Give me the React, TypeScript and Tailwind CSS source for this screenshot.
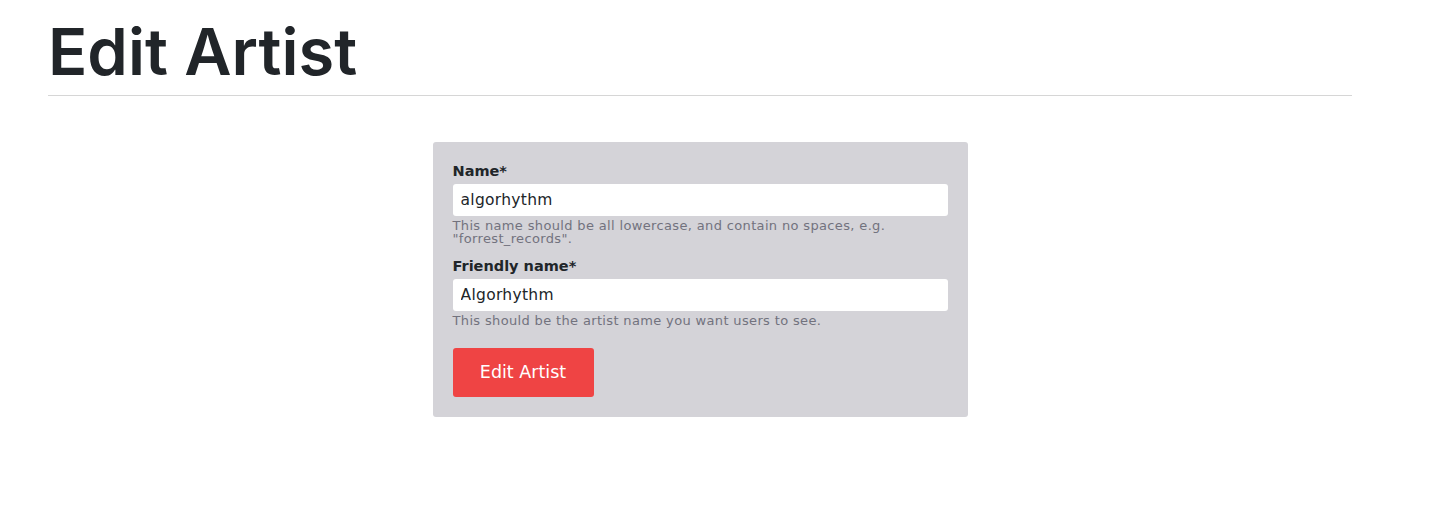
import React, { useState } from 'react';

const App: React.FC = () => {
  const [name, setName] = useState('algorhythm');
  const [friendly, setFriendly] = useState('Algorhythm');

  return (
    <div className="min-h-[531px] bg-white font-['DejaVu_Sans',sans-serif]">
      <div className="ml-12 w-[1304px]">
        {/* Page heading */}
        <h1 className="pt-[16px] pb-[7px] text-[65px] leading-[72px] font-semibold text-[#212529] font-['Inter',sans-serif]">
          Edit Artist
        </h1>
        <hr className="border-t border-[#d6d6d6]" />

        <div className="flex justify-center pt-[46px]">
          <form
            className="w-[535px] bg-[#d4d3d8] rounded-[3px] px-5 pt-[18px] pb-5 flex flex-col"
            onSubmit={(e) => e.preventDefault()}
          >
            <label className="text-[14.5px] leading-[22px] font-bold text-[#212529]">Name*</label>
            <input
              value={name}
              onChange={(e) => setName(e.target.value)}
              className="mt-[2px] h-8 w-full rounded-[3px] bg-white px-2 text-[15.5px] tracking-[0.3px] text-[#212529] outline-none"
            />
            <p className="mt-[3px] text-[13px] leading-[13px] tracking-[0.35px] text-[#72727e]">
              This name should be all lowercase, and contain no spaces, e.g.
              <br />
              "forrest_records".
            </p>

            <label className="mt-[10px] text-[14.5px] leading-[22px] font-bold text-[#212529]">Friendly name*</label>
            <input
              value={friendly}
              onChange={(e) => setFriendly(e.target.value)}
              className="mt-[2px] h-8 w-full rounded-[3px] bg-white px-2 text-[15.5px] tracking-[0.3px] text-[#212529] outline-none"
            />
            <p className="mt-[3px] text-[13px] leading-[13px] tracking-[0.35px] text-[#72727e]">
              This should be the artist name you want users to see.
            </p>

            <div className="mt-[21px]">
              <button
                type="submit"
                className="h-[49px] w-[141px] rounded-[3px] bg-[#ef4444] text-[17.5px] text-white"
              >
                Edit Artist
              </button>
            </div>
          </form>
        </div>
      </div>
    </div>
  );
};

export default App;
